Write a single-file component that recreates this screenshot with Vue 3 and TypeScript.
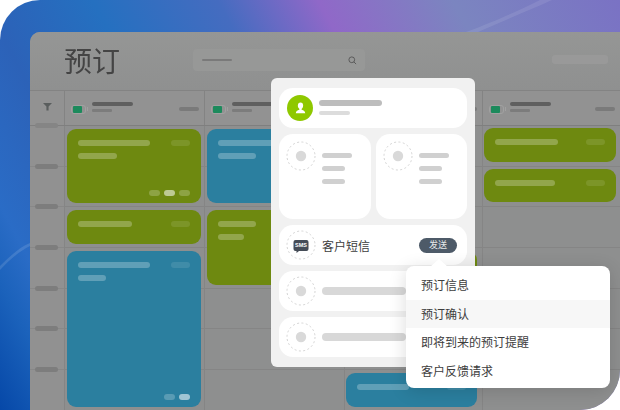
<template>
  <div class="frame">
    <svg class="streaks" viewBox="0 0 620 410" width="620" height="410">
      <path d="M478 32 C505 20 530 10 552 0 L540 0 C520 10 498 20 466 32 Z" fill="#fff" opacity="0.09" />
      <path d="M0 266 C10 256 20 247 30 243 L30 246 C20 251 10 259 0 270 Z" fill="#fff" opacity="0.12" />
    </svg>

    <div class="window">
      <header class="topbar">
        <h1 class="title">预订</h1>
        <div class="search">
          <span class="search-bar"></span>
          <svg class="search-icon" viewBox="0 0 10 10" width="9" height="9">
            <circle cx="4.2" cy="4.2" r="3.2" fill="none" stroke="#555" stroke-width="1" />
            <path d="M6.6 6.6 L9 9" stroke="#555" stroke-width="1" />
          </svg>
        </div>
        <span class="top-action"></span>
      </header>

      <div class="board">
        <div class="head-cell filter-cell">
          <svg viewBox="0 0 10 10" width="9" height="9">
            <path d="M0 1 H10 L6.2 5 V9.5 H3.8 V5 Z" fill="#5a5e5e" />
          </svg>
        </div>
        <div v-for="n in 4" :key="n" class="head-cell">
          <span class="battery"><i></i></span>
          <span class="head-text">
            <b></b>
            <em></em>
          </span>
          <span class="head-right"></span>
        </div>

        <div class="grid">
          <div class="times">
            <div class="time-first"><span></span></div>
            <div v-for="n in 6" :key="n" class="time-row"><span></span></div>
          </div>
          <div v-for="n in 4" :key="n" class="col-lines">
            <div v-for="r in 7" :key="r" class="line-row"></div>
          </div>

          <div
            v-for="(ev, i) in events"
            :key="i"
            class="event"
            :class="[ev.color, 'col-' + ev.col]"
            :style="{ gridColumn: ev.col + 1, gridRow: ev.row + ' / span ' + ev.span }"
          >
            <div class="event-top">
              <span class="ev-bar" :style="{ width: ev.w1 + 'px' }"></span>
              <span class="ev-side"></span>
            </div>
            <span v-if="ev.w2" class="ev-bar second" :style="{ width: ev.w2 + 'px' }"></span>
            <div v-if="ev.dots" class="ev-dots">
              <span v-for="d in ev.dots" :key="d" class="ev-dot" :class="{ on: d === ev.dotOn }"></span>
            </div>
          </div>
        </div>
      </div>
    </div>

    <section class="popup">
      <div class="card profile">
        <span class="avatar">
          <svg viewBox="0 0 16 16" width="15" height="15">
            <ellipse cx="8" cy="5" rx="2.8" ry="3.3" fill="#fff" />
            <path d="M6.8 7.5 H9.2 V9.2 C11.5 9.8 13 10.6 13 13 H3 C3 10.6 4.5 9.8 6.8 9.2 Z" fill="#fff" />
          </svg>
        </span>
        <span class="profile-text">
          <b></b>
          <em></em>
        </span>
      </div>

      <div class="pair">
        <div v-for="n in 2" :key="n" class="card mini">
          <svg class="ring" viewBox="0 0 30 30" width="30" height="30">
            <circle cx="15" cy="15" r="14" fill="none" stroke="#cfcfcf" stroke-width="0.9" stroke-dasharray="2 2.4" />
            <circle cx="15" cy="15" r="5.2" fill="#d9d9d9" />
          </svg>
          <div class="mini-lines">
            <span class="long"></span>
            <span></span>
            <span></span>
          </div>
        </div>
      </div>

      <div class="card row sms">
        <span class="ring-wrap">
          <svg class="ring" viewBox="0 0 30 30" width="30" height="30">
            <circle cx="15" cy="15" r="14" fill="none" stroke="#cfcfcf" stroke-width="0.9" stroke-dasharray="2 2.4" />
            <path d="M9.5 10 H20.5 A2 2 0 0 1 22.5 12 V19 A2 2 0 0 1 20.5 21 H13 L10.5 23 V21 H9.5 A2 2 0 0 1 7.5 19 V12 A2 2 0 0 1 9.5 10 Z" fill="#454c57" />
          </svg>
          <span class="sms-label">SMS</span>
        </span>
        <span class="sms-title">客户短信</span>
        <span class="send">发送</span>
      </div>

      <div v-for="n in 2" :key="n" class="card row">
        <svg class="ring" viewBox="0 0 30 30" width="30" height="30">
          <circle cx="15" cy="15" r="14" fill="none" stroke="#cfcfcf" stroke-width="0.9" stroke-dasharray="2 2.4" />
          <circle cx="15" cy="15" r="5.2" fill="#d9d9d9" />
        </svg>
        <span class="row-bar"></span>
      </div>
    </section>

    <nav class="menu">
      <span class="menu-arrow"></span>
      <div
        v-for="item in menuItems"
        :key="item"
        class="menu-item"
        :class="{ active: item === '预订确认' }"
      >
        {{ item }}
      </div>
    </nav>
  </div>
</template>

<script setup lang="ts">
interface BookingEvent {
  col: number
  row: number
  span: number
  color: 'green' | 'blue'
  w1: number
  w2?: number
  dots?: number
  dotOn?: number
}

const events: BookingEvent[] = [
  { col: 1, row: 1, span: 2, color: 'green', w1: 72, w2: 39, dots: 3, dotOn: 2 },
  { col: 1, row: 3, span: 1, color: 'green', w1: 54 },
  { col: 1, row: 4, span: 4, color: 'blue', w1: 72, w2: 28, dots: 2, dotOn: 2 },
  { col: 2, row: 1, span: 2, color: 'blue', w1: 72, w2: 38 },
  { col: 2, row: 3, span: 2, color: 'green', w1: 38, w2: 26 },
  { col: 3, row: 4, span: 1, color: 'green', w1: 40 },
  { col: 3, row: 7, span: 1, color: 'blue', w1: 52 },
  { col: 4, row: 1, span: 1, color: 'green', w1: 63 },
  { col: 4, row: 2, span: 1, color: 'green', w1: 60 }
]

const menuItems = ['预订信息', '预订确认', '即将到来的预订提醒', '客户反馈请求']
</script>

<style>
html,
body {
  margin: 0;
  background: #fff;
}
</style>

<style scoped>
.frame {
  position: relative;
  width: 620px;
  height: 410px;
  overflow: hidden;
  box-sizing: border-box;
  padding: 32px 0 0 30px;
  border-radius: 40px 0 40px 0;
  background: linear-gradient(62deg, #0648a8 0%, #1b62bb 8%, #2a6cc6 13%, #2c62b8 24%, #2570c0 37%, #456cc0 52%, #9068c8 64%, #7b85c0 80%, #7a72c4 100%);
  font-family: "Noto Sans CJK SC", "Noto Sans", sans-serif;
}

.streaks {
  position: absolute;
  left: 0;
  top: 0;
}

.window {
  position: relative;
  width: 590px;
  height: 378px;
  border-radius: 10px 0 0 0;
  overflow: hidden;
  background: #8e8f8f;
  filter: blur(0.7px);
}

.topbar {
  height: 58px;
  display: flex;
  align-items: center;
  padding: 0 12px 0 34px;
  background: linear-gradient(180deg, #959695 0%, #8f9090 100%);
}

.title {
  width: 129px;
  margin: -2px 0 0;
  font-size: 28px;
  line-height: 58px;
  font-weight: 400;
  color: #444;
}

.search {
  width: 172px;
  height: 22px;
  margin-top: -2px;
  display: flex;
  align-items: center;
  justify-content: space-between;
  padding: 0 8px 0 9px;
  box-sizing: border-box;
  background: #979897;
  border-radius: 4px;
}

.search-bar {
  width: 30px;
  height: 2px;
  background: #7a7a7a;
  border-radius: 1px;
}

.top-action {
  width: 56px;
  height: 9px;
  margin-left: auto;
  margin-top: -3px;
  background: #999;
  border-radius: 3px;
}

.board {
  display: grid;
  grid-template-columns: 34px 140px 140px 138px 138px;
  grid-template-rows: 35px 1fr;
  height: 320px;
}

.head-cell {
  display: flex;
  align-items: center;
  padding: 0 5px 0 6px;
  border-top: 1px solid #838383;
  border-left: 1px solid #838383;
  box-sizing: border-box;
  background: #929292;
}

.filter-cell {
  justify-content: center;
  padding: 0 0 4px;
  border-left: 0;
}

.battery {
  position: relative;
  width: 15px;
  height: 9px;
  padding: 0 0 0 1px;
  box-sizing: border-box;
  border: 1px solid #a1a1a1;
  border-radius: 3px;
  margin-right: 6px;
  margin-top: 3px;
  display: flex;
}

.battery::after {
  content: "";
  position: absolute;
  right: -3px;
  top: 1px;
  width: 1px;
  height: 4px;
  background: #a1a1a1;
}

.battery i {
  width: 9px;
  background: #1c8a5c;
  border-radius: 1px;
}

.head-text {
  display: flex;
  flex-direction: column;
  gap: 3px;
  margin: -2px 0 0 0;
}

.head-text b {
  width: 41px;
  height: 4px;
  border-radius: 2px;
  background: #5f5f5f;
}

.head-text em {
  width: 20px;
  height: 3px;
  border-radius: 1px;
  background: #7c7c7c;
}

.head-right {
  width: 20px;
  height: 4px;
  margin-left: auto;
  margin-top: 2px;
  border-radius: 2px;
  background: #7a7a7a;
}

.grid {
  grid-column: 1 / -1;
  display: grid;
  grid-template-columns: 34px 140px 140px 138px 138px;
  grid-template-rows: repeat(7, 40.7px);
  border-top: 1px solid #7f7f7f;
  box-sizing: border-box;
}

.times,
.col-lines {
  grid-row: 1 / span 7;
  display: flex;
  flex-direction: column;
}

.times {
  grid-column: 1;
  background: #919191;
}

.time-first {
  height: 0;
  position: relative;
}

.time-first span {
  position: absolute;
  left: 5px;
  top: -3px;
  width: 23px;
  height: 5px;
  border-radius: 3px;
  background: #858585;
}

.time-row {
  height: 40.7px;
  flex: none;
  position: relative;
  box-sizing: border-box;
  border-bottom: 1px solid #888;
}

.time-row span {
  position: absolute;
  left: 5px;
  bottom: -3px;
  width: 23px;
  height: 5px;
  border-radius: 3px;
  background: #7d7d7d;
}

.col-lines {
  border-left: 1px solid #858585;
}

.col-lines:nth-child(2) {
  grid-column: 2;
}

.col-lines:nth-child(3) {
  grid-column: 3;
}

.col-lines:nth-child(4) {
  grid-column: 4;
}

.col-lines:nth-child(5) {
  grid-column: 5;
}

.line-row {
  height: 40.7px;
  flex: none;
  border-bottom: 1px solid #858585;
  box-sizing: border-box;
}

.event {
  position: relative;
  z-index: 1;
  margin: 3px 3px 4px 3px;
  padding: 11px 11px 0;
  border-radius: 9px;
  display: flex;
  flex-direction: column;
  box-sizing: border-box;
  min-height: 0;
}

.event.col-3 {
  margin: 3px 5px 4px 2px;
}

.event.col-4 {
  margin: 2px 4px 5px 2px;
}

.event.green {
  background: #6e8910;
}

.event.blue {
  background: #2b7f9f;
}

.event-top {
  display: flex;
  justify-content: space-between;
  align-items: center;
}

.ev-bar {
  height: 6px;
  border-radius: 3px;
  background: rgba(255, 255, 255, 0.25);
}

.ev-bar.second {
  margin-top: 7px;
}

.ev-side {
  width: 19px;
  height: 6px;
  border-radius: 3px;
  background: rgba(255, 255, 255, 0.1);
}

.ev-dots {
  margin-top: auto;
  margin-bottom: 7px;
  align-self: flex-end;
  display: flex;
  gap: 4px;
}

.ev-dot {
  width: 11px;
  height: 6px;
  border-radius: 3px;
  background: rgba(255, 255, 255, 0.22);
}

.ev-dot.on {
  background: rgba(255, 255, 255, 0.55);
}

.popup {
  position: absolute;
  left: 271px;
  top: 78px;
  width: 204px;
  height: 289px;
  padding: 10px 8px;
  box-sizing: border-box;
  display: flex;
  flex-direction: column;
  gap: 6px;
  border-radius: 6px;
  background: #f1f1f1;
}

.card {
  background: #fff;
  border-radius: 14px;
  box-sizing: border-box;
}

.profile {
  height: 40px;
  display: flex;
  align-items: center;
  padding-left: 8px;
  gap: 6px;
}

.avatar {
  width: 26px;
  height: 26px;
  border-radius: 50%;
  background: #8fc800;
  display: flex;
  align-items: center;
  justify-content: center;
}

.profile-text {
  display: flex;
  flex-direction: column;
  gap: 5px;
  margin-top: -1px;
}

.profile-text b {
  width: 63px;
  height: 6px;
  border-radius: 3px;
  background: #bdbdbd;
}

.profile-text em {
  width: 31px;
  height: 4px;
  border-radius: 2px;
  background: #dcdcdc;
}

.pair {
  display: flex;
  gap: 5px;
}

.mini {
  flex: 1;
  height: 85px;
  display: flex;
  align-items: flex-start;
  padding: 7px 0 0 7px;
  gap: 6px;
}

.mini-lines {
  display: flex;
  flex-direction: column;
  gap: 8px;
  padding-top: 12px;
}

.mini-lines span {
  width: 23px;
  height: 5px;
  border-radius: 3px;
  background: #d0d0d0;
}

.mini-lines .long {
  width: 30px;
}

.row {
  height: 40px;
  display: flex;
  align-items: center;
  padding: 0 10px 0 7px;
  gap: 6px;
}

.ring {
  flex: none;
  display: block;
}

.ring-wrap {
  position: relative;
  width: 30px;
  height: 30px;
  flex: none;
}

.sms-label {
  position: absolute;
  left: 7px;
  top: 10px;
  width: 16px;
  text-align: center;
  font-family: "Liberation Sans", sans-serif;
  font-size: 5.5px;
  line-height: 11px;
  font-weight: 700;
  color: #fff;
}

.sms-title {
  font-size: 12px;
  color: #3d3d3d;
}

.send {
  margin-left: auto;
  width: 38px;
  height: 15px;
  border-radius: 8px;
  background: #4d5a68;
  color: #e6e9eb;
  font-size: 9px;
  line-height: 14px;
  text-align: center;
}

.row-bar {
  width: 84px;
  height: 8px;
  border-radius: 4px;
  background: #d8d8d8;
}

.menu {
  position: absolute;
  left: 406px;
  top: 266px;
  width: 204px;
  height: 122px;
  padding-top: 5px;
  box-sizing: border-box;
  border-radius: 8px;
  background: #fff;
  box-shadow: 0 3px 18px rgba(0, 0, 0, 0.14);
}

.menu-arrow {
  position: absolute;
  left: 24px;
  top: -7px;
  width: 0;
  height: 0;
  border-left: 9px solid transparent;
  border-right: 9px solid transparent;
  border-bottom: 8px solid #fff;
}

.menu-item {
  height: 28.5px;
  padding-left: 15px;
  font-size: 12px;
  line-height: 28px;
  color: #3d3d3d;
}

.menu-item.active {
  background: #f7f7f7;
}
</style>
